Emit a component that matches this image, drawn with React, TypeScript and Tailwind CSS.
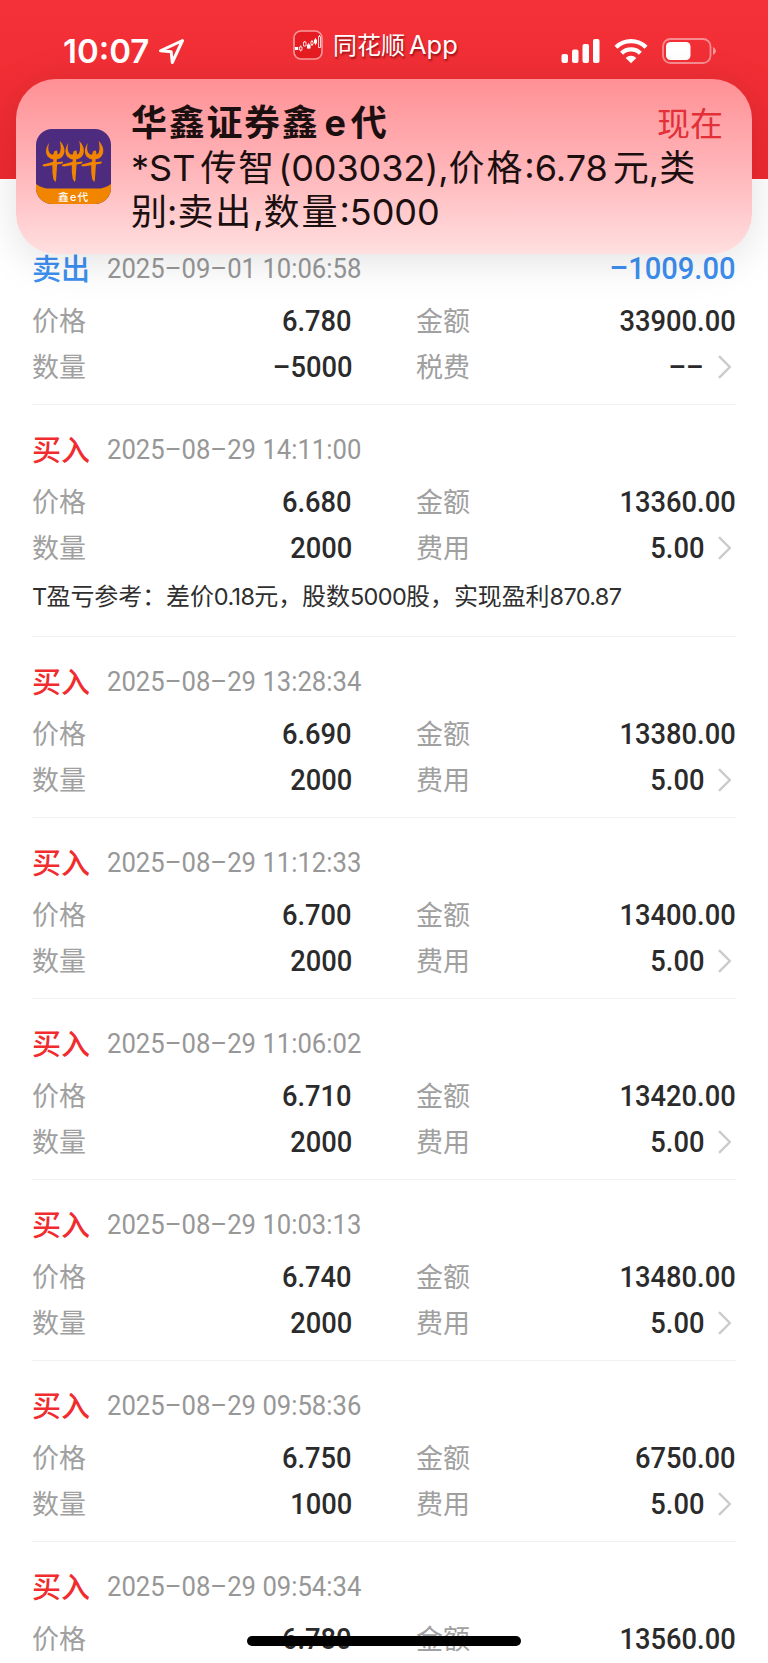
import React from "react";

type Trade = {
  side: "买入" | "卖出";
  time: string;
  profit?: string;
  price: string;
  amount: string;
  qty?: string;
  feeLabel?: string;
  fee?: string;
  note?: string;
};

const trades: Trade[] = [
  { side: "卖出", time: "2025–09–01 10:06:58", profit: "–1009.00", price: "6.780", amount: "33900.00", qty: "–5000", feeLabel: "税费", fee: "––" },
  { side: "买入", time: "2025–08–29 14:11:00", price: "6.680", amount: "13360.00", qty: "2000", feeLabel: "费用", fee: "5.00", note: "T盈亏参考：差价0.18元，股数5000股，实现盈利870.87" },
  { side: "买入", time: "2025–08–29 13:28:34", price: "6.690", amount: "13380.00", qty: "2000", feeLabel: "费用", fee: "5.00" },
  { side: "买入", time: "2025–08–29 11:12:33", price: "6.700", amount: "13400.00", qty: "2000", feeLabel: "费用", fee: "5.00" },
  { side: "买入", time: "2025–08–29 11:06:02", price: "6.710", amount: "13420.00", qty: "2000", feeLabel: "费用", fee: "5.00" },
  { side: "买入", time: "2025–08–29 10:03:13", price: "6.740", amount: "13480.00", qty: "2000", feeLabel: "费用", fee: "5.00" },
  { side: "买入", time: "2025–08–29 09:58:36", price: "6.750", amount: "6750.00", qty: "1000", feeLabel: "费用", fee: "5.00" },
  { side: "买入", time: "2025–08–29 09:54:34", price: "6.780", amount: "13560.00" },
];

function Num({ children, className = "" }: { children: React.ReactNode; className?: string }) {
  return (
    <span className={`inline-block origin-right scale-x-[0.91] whitespace-nowrap font-['Roboto',sans-serif] text-[30px] leading-[34px] font-medium text-[#2b2b2b] ${className}`}>
      {children}
    </span>
  );
}

function Label({ children }: { children: React.ReactNode }) {
  return <span className="mt-px text-[27px] leading-[40px] font-normal text-[#a0a0a0]">{children}</span>;
}

/* Latin runs are set tighter than the Chinese text around them. */
function Note({ text }: { text: string }) {
  return (
    <p className="flex h-[51px] items-center text-[24px] whitespace-pre text-[#2f2f2f]">
      {text.split(/([A-Z0-9.]+)/).map((part, i) =>
        i % 2 ? (
          <span key={i} className="text-[23.5px] font-normal tracking-[-0.65px]">{part}</span>
        ) : (
          <span key={i} className="tracking-[-0.1px]">{part}</span>
        ),
      )}
    </p>
  );
}

function TradeItem({ t }: { t: Trade }) {
  const sell = t.side === "卖出";
  return (
    <section className="mx-8 shrink-0 border-b border-[#f1f1f1] pt-5 pb-[14px] last:border-b-0 last:pb-0">
      <div className="flex h-[50px] items-center">
        <span className={`mt-px w-[75px] shrink-0 text-[29px] font-medium ${sell ? "text-[#3d8ff0]" : "text-[#f02c2f]"}`}>{t.side}</span>
        <span className="inline-block origin-left scale-x-[0.933] whitespace-nowrap font-['Roboto',sans-serif] text-[27.5px] text-[#979797]">
          {t.time}
        </span>
        {t.profit && (
          <span className="mb-[2px] ml-auto inline-block origin-right scale-x-[0.91] font-['Roboto',sans-serif] text-[32px] font-medium text-[#3d8ff0]">
            {t.profit}
          </span>
        )}
      </div>
      <div className="mt-1 grid grid-cols-[320px_320px] gap-x-16">
        <div className="flex h-[46px] items-center justify-between">
          <Label>价格</Label>
          <Num>{t.price}</Num>
        </div>
        <div className="flex h-[46px] items-center justify-between">
          <Label>金额</Label>
          <Num>{t.amount}</Num>
        </div>
        {t.qty && (
          <>
            <div className="flex h-[46px] items-center justify-between">
              <Label>数量</Label>
              <Num>{t.qty}</Num>
            </div>
            <div className="flex h-[46px] items-center">
              <Label>{t.feeLabel}</Label>
              <Num className="ml-auto">{t.fee}</Num>
              <svg className="mr-[5px] ml-[14px] h-6 w-[13px]" viewBox="0 0 13 24" fill="none" stroke="#cbcbcb" strokeWidth="2.4">
                <path d="M1 1.2 11.8 12 1 22.8" />
              </svg>
            </div>
          </>
        )}
      </div>
      {t.note && <Note text={t.note} />}
    </section>
  );
}

function Ox({ x }: { x: number }) {
  return (
    <path
      transform={`translate(${x} 0)`}
      d="M-18 42C-28 55-30 72-22 82-16 88-9 91-5 91L-6 98-16 101-36 106-38 110-32 112-8 108-8 130-5 150 1 158 3 152 6 106 22 103 24 97 5 99 5 90C18 89 28 80 28 64 28 54 22 44 14 36 17 48 18 62 14 72L8 77 6 64-2 66-6 77C-18 76-24 62-18 42Z"
    />
  );
}

function Banner() {
  return (
    <div className="absolute top-[79px] right-4 left-4 flex h-[175px] rounded-[40px] bg-linear-to-b from-[#ff9095] via-[#ffb4b8] to-[#ffdfe0] shadow-[0_6px_44px_rgba(0,0,0,0.12)]">
      <svg className="mt-[50px] ml-5 size-[75px] shrink-0 rounded-[16px]" viewBox="0 0 224 224">
        <rect width="224" height="224" fill="#4d2c80" />
        <g fill="#f28500">
          <path d="M0 164Q18 178 44 178H180Q206 178 224 164V224H0Z" />
          <Ox x={57} />
          <Ox x={115} />
          <Ox x={173} />
        </g>
        <text x="66" y="215" fontSize="32" fill="#fff" fontWeight="500" fontFamily="Inter, 'Noto Sans CJK SC', sans-serif" textLength="90">
          鑫e代
        </text>
      </svg>
      <div className="ml-5 flex-1 pt-[22px] font-['Inter','Noto_Sans_CJK_SC',sans-serif] text-[36px] leading-[44px] text-[#1b0f10]">
        <div className="flex h-[45px] justify-between pr-[29px]">
          <span className="font-bold tracking-[1.7px]">
            华鑫证券鑫<span className="mr-[3px] ml-[5px]">e</span>代
          </span>
          <span className="mt-px text-[33px] text-[#e22f38]">现在</span>
        </div>
        <div className="whitespace-nowrap">
          *ST<span className="ml-[5px] tracking-[1.9px]">传智</span>
          <span className="ml-[2px] inline-block tracking-[-0.1px]">(003032),</span>
          <span className="tracking-[1.9px]">价格</span>:6.78
          <span className="ml-[5px]">元</span>,<span>类</span>
        </div>
        <div className="whitespace-nowrap">
          <span>别</span>:<span className="tracking-[1.9px]">卖出</span>,<span className="tracking-[1.9px]">数量</span>:5000
        </div>
      </div>
    </div>
  );
}

function StatusBar() {
  return (
    <header className="flex h-[179px] shrink-0 items-start bg-linear-to-b from-[#f43138] to-[#ee2930] font-['Inter','Noto_Sans_CJK_SC',sans-serif] text-white">
      <span className="mt-[31px] ml-[63px] w-[86px] text-[33px] leading-[40px] font-semibold whitespace-nowrap">10:07</span>
      <svg className="mt-[38px] ml-[9px] h-[27px] w-[27px]" viewBox="0 0 27 27" fill="none" stroke="#fff" strokeWidth="3" strokeLinejoin="round">
        <path d="M24.5 2.5 2.5 12.8 13.2 13.8 14.3 24.5Z" />
      </svg>
      <svg className="mt-[30px] ml-[108px] size-[30px]" viewBox="0 0 30 30">
        <rect x="1" y="1" width="28" height="28" rx="7" fill="#e51c22" stroke="#f79a9c" strokeWidth="1.6" />
        <path d="M2 17h3.2v3H2zM14 14.500h3.500v4H14zM21 9.500h3v4h-3z" fill="#fff" />
        <path d="M6.500 17h2.500v3H6.500zM10.500 12h2.500v4h-2.500zM18 11.500h2v3h-2zM25.500 6.500h2v11h-2zM7.700 15.500v1.500M7.700 20v1.500M11.700 11v1M15.700 13v6M19 10v1.500M19 14.500v1.500M22.500 8v7M26.500 5v1.500" fill="none" stroke="#fff" strokeWidth="0.8" />
      </svg>
      <span className="mt-[27px] ml-[10px] w-[126px] text-[24px] leading-[36px] whitespace-nowrap [text-shadow:1px_2px_2px_rgba(90,0,0,0.6)]">
        同花顺<span className="ml-1 text-[25.5px]">App</span>
      </span>
      <svg className="mt-[38px] ml-[102px] h-[26px] w-[39px]" viewBox="0 0 39 26" fill="#fff">
        <rect x="0.500" y="16" width="6.500" height="9" rx="2" />
        <rect x="11" y="11.500" width="6.500" height="13.500" rx="2" />
        <rect x="21.500" y="6" width="6.500" height="19" rx="2" />
        <rect x="32" y="1" width="6.500" height="24" rx="2" />
      </svg>
      <svg className="mt-[38px] ml-[14px] h-[26px] w-[34px]" viewBox="0 0 34 26" fill="none" stroke="#fff" strokeWidth="4.300">
        <path d="M2 9.300a21.500 21.500 0 0 1 30 0" />
        <path d="M7.600 15.200a13.500 13.500 0 0 1 18.800 0" />
        <path d="M17 25.200 11.700 19.900a7.700 7.700 0 0 1 10.600 0Z" fill="#fff" stroke="none" />
      </svg>
      <svg className="mt-[38px] ml-[14px] h-[26px] w-[54px]" viewBox="0 0 54 26">
        <rect x="1" y="1" width="47.500" height="24" rx="7.500" fill="none" stroke="#fff" strokeOpacity="0.45" strokeWidth="1.800" />
        <rect x="4" y="4" width="24.500" height="18" rx="4.500" fill="#fff" />
        <path d="M51 9q3 1.500 3 4t-3 4z" fill="#fff" fillOpacity="0.5" />
      </svg>
    </header>
  );
}

export default function App() {
  return (
    <div className="relative flex h-[1663px] w-[768px] flex-col overflow-hidden bg-white font-['Inter','Noto_Sans_CJK_SC',sans-serif]">
      <StatusBar />
      <main className="flex flex-col pt-[45px]">
        {trades.map((t) => (
          <TradeItem key={t.time} t={t} />
        ))}
      </main>
      <Banner />
      <div className="absolute bottom-[17px] left-[247px] h-[10px] w-[274px] rounded-full bg-black" />
    </div>
  );
}
